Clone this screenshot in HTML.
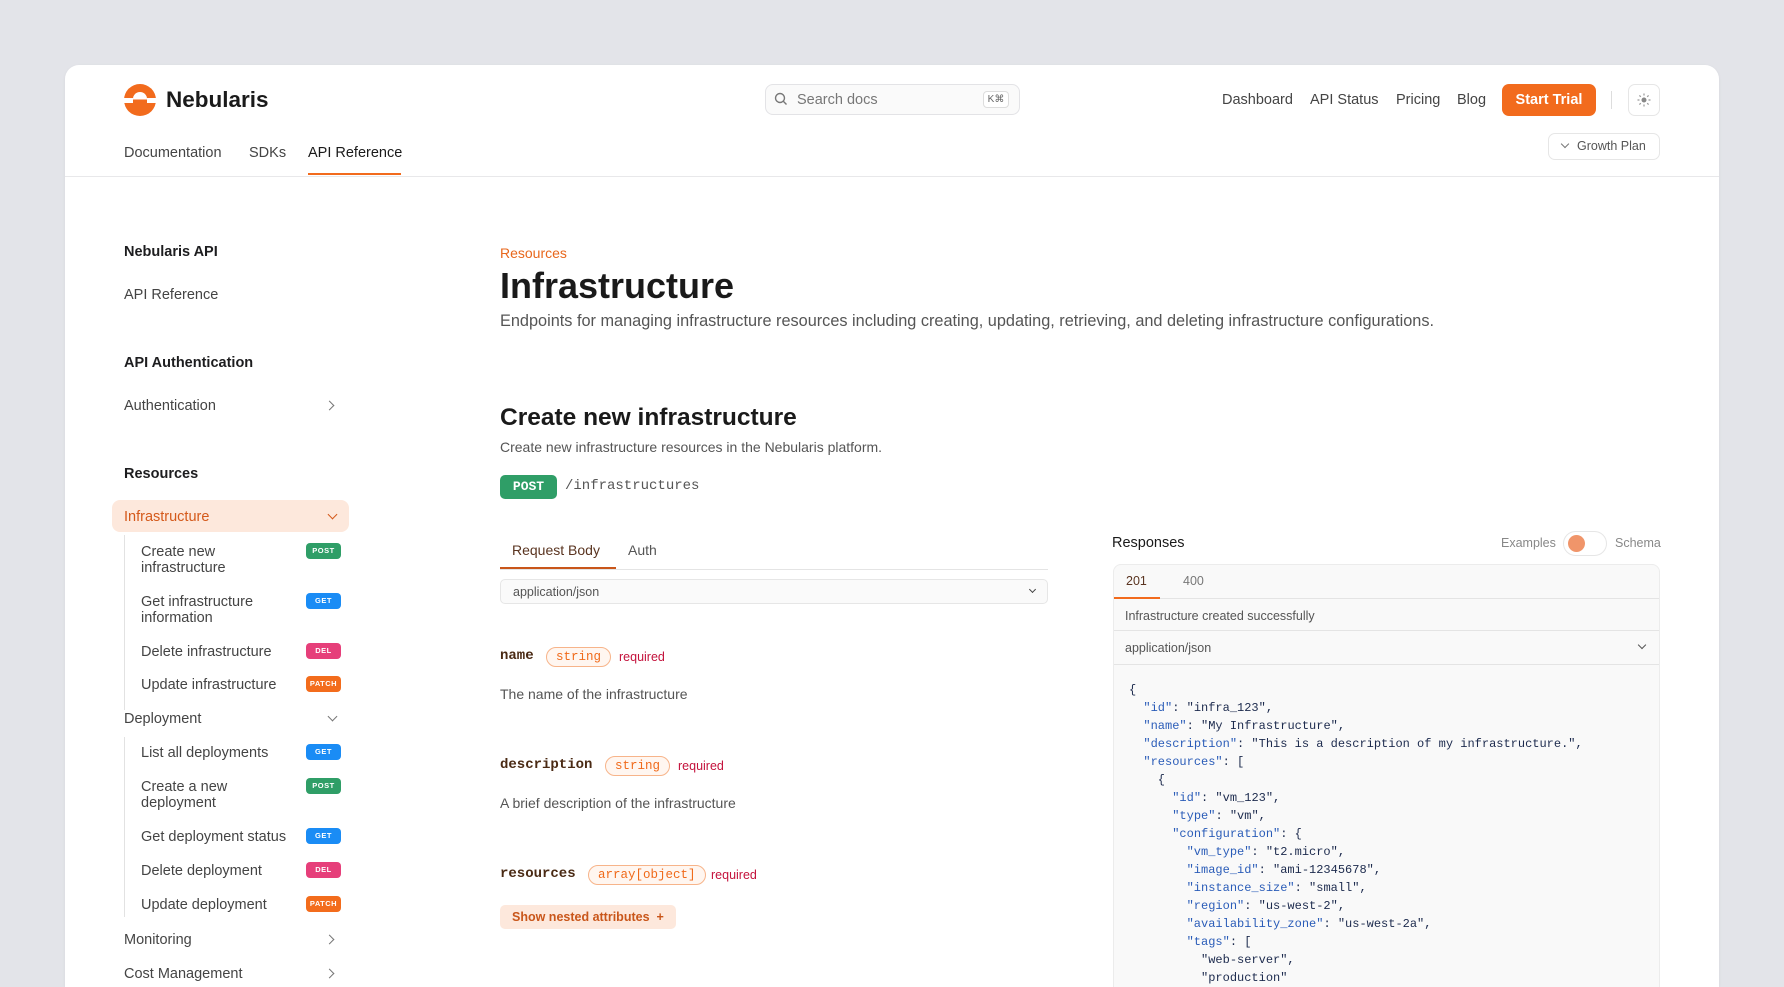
<!DOCTYPE html>
<html><head><meta charset="utf-8"><style>
*{box-sizing:border-box;margin:0;padding:0}
html{width:1784px;height:987px;overflow:hidden}
body{width:1784px;height:987px;background:#e3e4e9;font-family:"Liberation Sans",sans-serif;position:relative;overflow:hidden;color:#1d1d1f}
.card{position:absolute;left:65px;top:65px;width:1654px;height:922px;background:#fff;border-radius:14px 14px 0 0;box-shadow:0 1px 3px rgba(0,0,0,.06)}
.w{position:absolute;left:0;top:2px;width:1784px;height:985px;overflow:hidden}
.a{position:absolute;white-space:nowrap}
.nav{font-size:14.5px;color:#444}
.side{font-size:14.5px;color:#444}
.sh{font-size:14.5px;font-weight:bold;color:#1d1d1f}
.sub{font-size:14.5px;color:#444;line-height:16px}
.b{position:absolute;left:306px;width:35px;height:16px;border-radius:4px;color:#fff;font-size:7.5px;font-weight:bold;text-align:center;line-height:16px;letter-spacing:.5px}
.post{background:#2f9e67}.get{background:#1a8cf5}.del{background:#e63f7a}.patch{background:#f36c1c}
.chev{position:absolute;width:7px;height:7px;border-right:1.5px solid #777;border-bottom:1.5px solid #777}
.mono{font-family:"Liberation Mono",monospace}
.pn{font-family:"Liberation Mono",monospace;font-weight:bold;font-size:14px;color:#4a2a14}
.pt{font-family:"Liberation Mono",monospace;font-size:12.5px;color:#f06a1a;border:1px solid #f7b48a;background:#fff6f0;border-radius:11px;padding:2px 9px;line-height:14px}
.req{font-size:12.5px;color:#c4123c}
.code{font-family:"Liberation Mono",monospace;font-size:12px;line-height:18px;color:#1c2a4d;white-space:pre}
.k{color:#2a5cb8}
</style></head><body>
<div class="card"></div>
<div class="w">
<!-- header -->
<svg class="a" style="left:124px;top:82px" width="32" height="32" viewBox="0 0 32 32"><circle cx="16" cy="16" r="16" fill="#f26b1d"/><path d="M9 15 A7 7 0 0 1 23 15 Z" fill="#fff"/><rect x="0" y="14" width="9" height="5" fill="#fff"/><rect x="23" y="14" width="9" height="5" fill="#fff"/><rect x="9" y="14.5" width="14" height="1" fill="#fff"/></svg>
<div class="a" style="left:166px;top:85px;font-size:22.5px;font-weight:bold;color:#1a1a1a">Nebularis</div>
<div class="a" style="left:765px;top:82px;width:255px;height:31px;border:1px solid #e3e3e6;border-radius:8px;background:#fafafa"></div>
<div class="a" style="left:774px;top:90px"><svg width="14" height="14" viewBox="0 0 14 14"><circle cx="6" cy="6" r="4.5" fill="none" stroke="#777" stroke-width="1.4"/><path d="M9.3 9.3 L12.5 12.5" stroke="#777" stroke-width="1.4"/></svg></div>
<div class="a" style="left:797px;top:90px;font-size:14.5px;color:#777">Search docs</div>
<div class="a" style="left:983px;top:89px;width:26px;height:17px;border:1px solid #ddd;border-radius:4px;font-size:10px;color:#666;text-align:center;line-height:15px;background:#fff">K⌘</div>
<div class="a nav" style="left:1222px;top:90px">Dashboard</div>
<div class="a nav" style="left:1310px;top:90px">API Status</div>
<div class="a nav" style="left:1396px;top:90px">Pricing</div>
<div class="a nav" style="left:1457px;top:90px">Blog</div>
<div class="a" style="left:1502px;top:82px;width:94px;height:32px;background:#f26b1d;border-radius:7px;color:#fff;font-weight:bold;font-size:14.5px;text-align:center;line-height:32px">Start Trial</div>
<div class="a" style="left:1611px;top:89px;width:1px;height:18px;background:#ddd"></div>
<div class="a" style="left:1628px;top:82px;width:32px;height:32px;border:1px solid #e6e6e6;border-radius:7px"></div>
<div class="a" style="left:1637px;top:91px"><svg width="14" height="14" viewBox="0 0 14 14"><circle cx="7" cy="7" r="2.5" fill="#888"/><g stroke="#999" stroke-width="1.2"><path d="M7 0.5v2M7 11.5v2M0.5 7h2M11.5 7h2M2.4 2.4l1.4 1.4M10.2 10.2l1.4 1.4M2.4 11.6l1.4-1.4M10.2 3.8l1.4-1.4"/></g></svg></div>
<div class="a nav" style="left:124px;top:143px">Documentation</div>
<div class="a nav" style="left:249px;top:143px">SDKs</div>
<div class="a nav" style="left:308px;top:143px;color:#1a1a1a">API Reference</div>
<div class="a" style="left:308px;top:171px;width:93px;height:2px;background:#f26b1d"></div>
<div class="a" style="left:65px;top:174px;width:1654px;height:1px;background:#e8e8ea"></div>
<div class="a" style="left:1548px;top:131px;width:112px;height:27px;border:1px solid #e6e6e6;border-radius:7px"></div>
<div class="chev" style="left:1562px;top:139px;width:6px;height:6px;transform:rotate(45deg)"></div>
<div class="a" style="left:1577px;top:137px;font-size:12.5px;color:#555">Growth Plan</div>

<!-- sidebar -->
<div class="a sh" style="left:124px;top:242px">Nebularis API</div>
<div class="a side" style="left:124px;top:285px">API Reference</div>
<div class="a sh" style="left:124px;top:353px">API Authentication</div>
<div class="a side" style="left:124px;top:396px">Authentication</div>
<div class="chev" style="left:326px;top:400px;transform:rotate(-45deg)"></div>
<div class="a sh" style="left:124px;top:464px">Resources</div>
<div class="a" style="left:112px;top:498px;width:237px;height:32px;background:#fde8dc;border-radius:8px"></div>
<div class="a side" style="left:124px;top:507px;color:#d4591a">Infrastructure</div>
<div class="chev" style="left:329px;top:509px;transform:rotate(45deg);border-color:#d4591a"></div>
<div class="a" style="left:124px;top:533px;width:1px;height:175px;background:#e2e2e2"></div>
<div class="a sub" style="left:141px;top:542px">Create new<br>infrastructure</div><div class="b post" style="top:541px">POST</div>
<div class="a sub" style="left:141px;top:592px">Get infrastructure<br>information</div><div class="b get" style="top:591px">GET</div>
<div class="a sub" style="left:141px;top:642px">Delete infrastructure</div><div class="b del" style="top:641px">DEL</div>
<div class="a sub" style="left:141px;top:675px">Update infrastructure</div><div class="b patch" style="top:674px">PATCH</div>
<div class="a side" style="left:124px;top:709px">Deployment</div>
<div class="chev" style="left:329px;top:711px;transform:rotate(45deg)"></div>
<div class="a" style="left:124px;top:735px;width:1px;height:180px;background:#e2e2e2"></div>
<div class="a sub" style="left:141px;top:743px">List all deployments</div><div class="b get" style="top:742px">GET</div>
<div class="a sub" style="left:141px;top:777px">Create a new<br>deployment</div><div class="b post" style="top:776px">POST</div>
<div class="a sub" style="left:141px;top:827px">Get deployment status</div><div class="b get" style="top:826px">GET</div>
<div class="a sub" style="left:141px;top:861px">Delete deployment</div><div class="b del" style="top:860px">DEL</div>
<div class="a sub" style="left:141px;top:895px">Update deployment</div><div class="b patch" style="top:894px">PATCH</div>
<div class="a side" style="left:124px;top:930px">Monitoring</div>
<div class="chev" style="left:326px;top:934px;transform:rotate(-45deg)"></div>
<div class="a side" style="left:124px;top:964px">Cost Management</div>
<div class="chev" style="left:326px;top:968px;transform:rotate(-45deg)"></div>

<!-- main -->
<div class="a" style="left:500px;top:243px;font-size:14px;color:#e8671c">Resources</div>
<div class="a" style="left:500px;top:263px;font-size:36px;font-weight:bold;color:#1a1a1a">Infrastructure</div>
<div class="a" style="left:500px;top:310px;font-size:16.3px;color:#555">Endpoints for managing infrastructure resources including creating, updating, retrieving, and deleting infrastructure configurations.</div>
<div class="a" style="left:500px;top:402px;font-size:24.5px;font-weight:bold;color:#1a1a1a">Create new infrastructure</div>
<div class="a" style="left:500px;top:437px;font-size:14px;color:#555">Create new infrastructure resources in the Nebularis platform.</div>
<div class="a" style="left:500px;top:473px;width:57px;height:24px;background:#2f9e67;border-radius:5px;color:#fff;font-size:13px;font-weight:bold;text-align:center;line-height:24px;font-family:'Liberation Mono',monospace">POST</div>
<div class="a mono" style="left:565px;top:476px;font-size:14px;color:#555">/infrastructures</div>
<div class="a" style="left:512px;top:540px;font-size:14px;color:#5a3420">Request Body</div>
<div class="a" style="left:628px;top:540px;font-size:14px;color:#555">Auth</div>
<div class="a" style="left:500px;top:567px;width:548px;height:1px;background:#e4e4e4"></div>
<div class="a" style="left:500px;top:565px;width:116px;height:2px;background:#c9561a"></div>
<div class="a" style="left:500px;top:577px;width:548px;height:25px;border:1px solid #e6e6e6;border-radius:5px;background:#fafafa"></div>
<div class="a" style="left:513px;top:583px;font-size:12.5px;color:#555">application/json</div>
<div class="chev" style="left:1030px;top:585px;width:5px;height:5px;transform:rotate(45deg);border-color:#444"></div>

<div class="a pn" style="left:500px;top:646px">name</div>
<div class="a pt" style="left:546px;top:645px">string</div>
<div class="a req" style="left:619px;top:648px">required</div>
<div class="a" style="left:500px;top:684px;font-size:14px;color:#555">The name of the infrastructure</div>
<div class="a pn" style="left:500px;top:755px">description</div>
<div class="a pt" style="left:605px;top:754px">string</div>
<div class="a req" style="left:678px;top:757px">required</div>
<div class="a" style="left:500px;top:793px;font-size:14px;color:#555">A brief description of the infrastructure</div>
<div class="a pn" style="left:500px;top:864px">resources</div>
<div class="a pt" style="left:588px;top:863px">array[object]</div>
<div class="a req" style="left:711px;top:866px">required</div>
<div class="a" style="left:500px;top:903px;width:176px;height:24px;background:#fde8dc;border-radius:5px;color:#c9561a;font-size:12.5px;font-weight:bold;line-height:24px;padding-left:12px">Show nested attributes &nbsp;+</div>

<!-- responses -->
<div class="a" style="left:1112px;top:533px;font-size:14.5px;color:#1a1a1a">Responses</div>
<div class="a" style="left:1501px;top:534px;font-size:12.5px;color:#888">Examples</div>
<div class="a" style="left:1563px;top:529px;width:44px;height:25px;border:1px solid #e6e6e6;border-radius:13px;background:#fff"></div>
<div class="a" style="left:1568px;top:533px;width:17px;height:17px;border-radius:50%;background:#f0956a"></div>
<div class="a" style="left:1615px;top:534px;font-size:12.5px;color:#888">Schema</div>
<div class="a" style="left:1113px;top:562px;width:547px;height:440px;border:1px solid #ececec;border-radius:8px;background:#f9f9f9"></div>
<div class="a" style="left:1126px;top:572px;font-size:12.5px;color:#5a3420">201</div>
<div class="a" style="left:1183px;top:572px;font-size:12.5px;color:#777">400</div>
<div class="a" style="left:1114px;top:596px;width:545px;height:1px;background:#e4e4e4"></div>
<div class="a" style="left:1114px;top:595px;width:46px;height:2px;background:#f26b1d"></div>
<div class="a" style="left:1125px;top:607px;font-size:12.5px;color:#555">Infrastructure created successfully</div>
<div class="a" style="left:1114px;top:628px;width:545px;height:1px;background:#e4e4e4"></div>
<div class="a" style="left:1125px;top:639px;font-size:12.5px;color:#555">application/json</div>
<div class="chev" style="left:1639px;top:640px;width:6px;height:6px;transform:rotate(45deg);border-color:#555"></div>
<div class="a" style="left:1114px;top:662px;width:545px;height:1px;background:#e4e4e4"></div>
<div class="a code" style="left:1129px;top:679px">{
  <span class="k">"id"</span>: "infra_123",
  <span class="k">"name"</span>: "My Infrastructure",
  <span class="k">"description"</span>: "This is a description of my infrastructure.",
  <span class="k">"resources"</span>: [
    {
      <span class="k">"id"</span>: "vm_123",
      <span class="k">"type"</span>: "vm",
      <span class="k">"configuration"</span>: {
        <span class="k">"vm_type"</span>: "t2.micro",
        <span class="k">"image_id"</span>: "ami-12345678",
        <span class="k">"instance_size"</span>: "small",
        <span class="k">"region"</span>: "us-west-2",
        <span class="k">"availability_zone"</span>: "us-west-2a",
        <span class="k">"tags"</span>: [
          "web-server",
          "production"</div>
</div>
</body></html>
